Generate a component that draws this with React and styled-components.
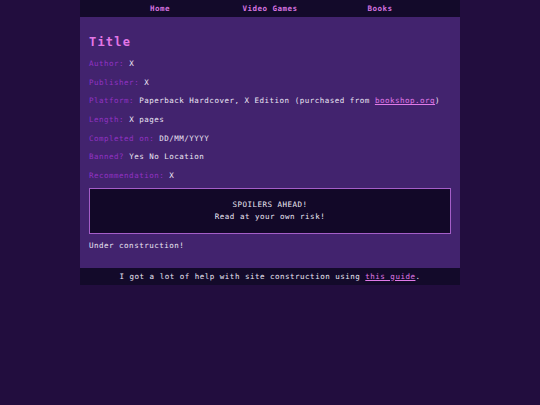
import React from 'react';
import styled, { createGlobalStyle } from 'styled-components';

const GlobalStyle = createGlobalStyle`
  html, body {
    margin: 0;
    padding: 0;
    background: #220d3e;
  }
  body {
    font-family: "DejaVu Sans Mono", "Liberation Mono", monospace;
    font-size: 7.5px;
    letter-spacing: 0.5px;
    color: #ece6f4;
  }
`;

const Page = styled.div`
  width: 380px;
  margin: 0 auto;
`;

const Nav = styled.nav`
  height: 17px;
  background: #130a2a;
  display: grid;
  grid-template-columns: repeat(3, 110px);
  justify-content: center;
  align-items: center;
`;

const NavLink = styled.a`
  text-align: center;
  color: #d874e0;
  font-weight: bold;
  text-decoration: none;
  line-height: 17px;
`;

const Main = styled.main`
  background: #42236e;
  padding: 10px 9px 16px;
`;

const Title = styled.h1`
  margin: 7px 0 5px;
  font-size: 12px;
  line-height: 16px;
  letter-spacing: 1.2px;
  color: #e276e6;
  font-weight: bold;
`;

const Row = styled.div`
  line-height: 18.67px;
  white-space: nowrap;
`;

const Label = styled.span`
  color: #9232c4;
`;

const Link = styled.a`
  color: #e07ae8;
  text-decoration: underline;
`;

const Spoiler = styled.div`
  margin: 2px 0 0;
  background: #120828;
  border: 1px solid #a45ec8;
  padding: 10px 0;
  text-align: center;
  line-height: 12px;
`;

const Note = styled.p`
  margin: 6px 0 0;
  line-height: 12px;
`;

const Footer = styled.footer`
  height: 17px;
  line-height: 17px;
  background: #130a2a;
  text-align: center;
`;

const rows = [
  ['Author:', 'X'],
  ['Publisher:', 'X'],
  ['Platform:', null],
  ['Length:', 'X pages'],
  ['Completed on:', 'DD/MM/YYYY'],
  ['Banned?', 'Yes No Location'],
  ['Recommendation:', 'X'],
];

export default function App() {
  return (
    <>
      <GlobalStyle />
      <Page>
        <Nav>
          <NavLink href="#">Home</NavLink>
          <NavLink href="#">Video Games</NavLink>
          <NavLink href="#">Books</NavLink>
        </Nav>
        <Main>
          <Title>Title</Title>
          {rows.map(([label, value]) => (
            <Row key={label}>
              <Label>{label}</Label>{' '}
              {value !== null ? (
                value
              ) : (
                <>
                  Paperback Hardcover, X Edition (purchased from{' '}
                  <Link href="#">bookshop.org</Link>)
                </>
              )}
            </Row>
          ))}
          <Spoiler>
            SPOILERS AHEAD!
            <br />
            Read at your own risk!
          </Spoiler>
          <Note>Under construction!</Note>
        </Main>
        <Footer>
          I got a lot of help with site construction using{' '}
          <Link href="#">this guide</Link>.
        </Footer>
      </Page>
    </>
  );
}
